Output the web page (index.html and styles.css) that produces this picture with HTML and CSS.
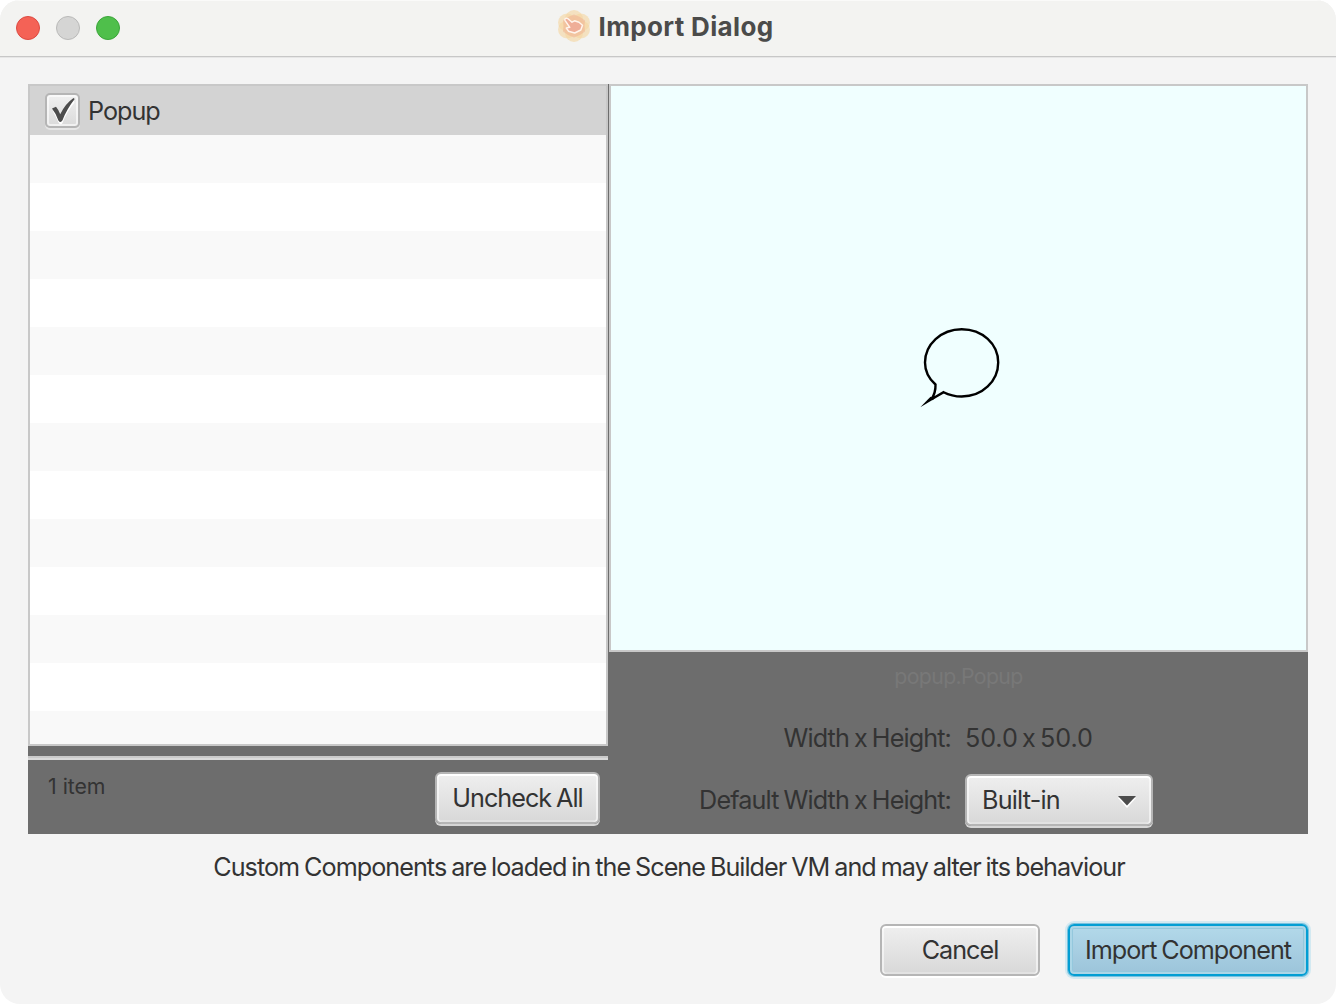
FILE: index.html
```html
<!DOCTYPE html>
<html lang="en">
<head>
<meta charset="utf-8">
<title>Import Dialog</title>
<link rel="stylesheet" href="styles.css">
</head>
<body>
<div class="window">
  <header class="titlebar">
    <div class="lights">
      <span class="light close"></span><span class="light minimize"></span><span class="light zoom"></span>
    </div>
    <div class="title">
      <svg class="app-icon" width="34" height="34" viewBox="0 0 34 34">
        <g fill="#f5d5a0" fill-opacity=".6">
          <circle cx="17" cy="10" r="9"/><circle cx="24" cy="13.500" r="9"/><circle cx="24" cy="20.500" r="9"/>
          <circle cx="17" cy="24" r="9"/><circle cx="10" cy="20.500" r="9"/><circle cx="10" cy="13.500" r="9"/>
        </g>
        <path d="M17 5.500L23 8L28 11.500L27.500 17L28 22.500L23 26L17 28.500L11 26L6 22.500L6.500 17L6 11.500L11 8Z" fill="#f0b696" fill-opacity=".6"/>
        <path d="M8 11.300C7.200 9.600 9.500 8.500 11 9.700L15 13.200L17.500 11.800L22 13.200L25.500 16.200L23.800 21L17.700 24L11.500 22.200L9.300 19L12.800 18.300Z" fill="#efae98" stroke="#fff4ec" stroke-width="1.500" stroke-linejoin="round"/>
      </svg>
      <h1 class="title-text">Import Dialog</h1>
    </div>
  </header>
  <main class="content">
    <section class="split">
      <div class="left">
        <div class="list">
          <div class="cell selected">
            <span class="checkbox">
              <svg width="24" height="28" viewBox="0 0 24 28"><path d="M2 14.500L5.200 12.800Q7.500 15 9.300 19Q13.500 10 22.600 3.500L23.500 5.500Q15.500 15 11.500 26Q10 28.500 7.800 26Q4.500 19 2 14.500z" fill="#fff"/><path d="M1 11.600L5 9.800Q7.600 12.800 9.200 17.300Q14 7 22.500 1L23.700 2Q15.800 12 11.500 23.300Q9.500 26.500 7.400 23.400Q4.500 16 1 11.600z" fill="#4c4c4c"/></svg>
            </span>
            <span class="popup-label">Popup</span>
          </div>
          <div class="cell"></div><div class="cell"></div><div class="cell"></div><div class="cell"></div>
          <div class="cell"></div><div class="cell"></div><div class="cell"></div><div class="cell"></div>
          <div class="cell"></div><div class="cell"></div><div class="cell"></div><div class="cell"></div>
          <div class="cell"></div>
        </div>
        <div class="separator"></div>
        <div class="list-footer">
          <span class="count">1 item</span>
          <button class="button uncheck"><span>Uncheck All</span></button>
        </div>
      </div>
      <div class="right">
        <div class="preview">
          <svg class="bubble" width="84" height="84" viewBox="0 0 84 84">
            <path d="M18.500 60.500C11 54 8 46.500 8 38.500C8 20.500 24 5.200 44.700 5.200S81.200 20 81.200 38.500S65.500 72.500 44.700 72.500C37.500 72.500 32 71 26.600 68.200L14.500 75.200Q18.800 68.500 18.500 60.500Z" fill="none" stroke="#000" stroke-width="2.400"/>
            <path d="M3.300 83.200L13.500 72.800L17.500 74.800Z" fill="#000"/>
          </svg>
        </div>
        <div class="class-name"><span>popup.Popup</span></div>
        <div class="size-row">
          <span class="label"><span class="size-label">Width x Height:</span></span>
          <span class="size-value">50.0 x 50.0</span>
        </div>
        <div class="default-row">
          <span class="label"><span class="default-label">Default Width x Height:</span></span>
          <button class="button select"><span>Built-in</span>
            <svg width="18" height="12" viewBox="0 0 18 12"><path d="M0 2H18L9 12Z" fill="#fff"/><path d="M0 0H18L9 9.500Z" fill="#4c4c4c"/></svg>
          </button>
        </div>
      </div>
    </section>
    <p class="notice"><span>Custom Components are loaded in the Scene Builder VM and may alter its behaviour</span></p>
    <footer class="actions">
      <button class="button cancel"><span>Cancel</span></button>
      <button class="button import"><span>Import Component</span></button>
    </footer>
  </main>
</div>
</body>
</html>
```
FILE: styles.css
```css
* { box-sizing: border-box; }
body {
  margin: 0;
  background: #fff;
  color: #333;
  font: 25.2px/32px Inter, "Liberation Sans", sans-serif;
  font-weight: 370;
  letter-spacing: -1px;
  word-spacing: -1.2px;
  white-space: nowrap;
}
.window {
  display: flex;
  flex-direction: column;
  width: 1336px;
  height: 1004px;
  border-radius: 20px;
  background: #f4f4f4;
  overflow: hidden;
}
.titlebar {
  display: grid;
  grid-template-columns: 1fr auto 1fr;
  height: 58px;
  padding: 0 16px;
  background: #f3f3f1;
  border-bottom: 1px solid #e6e6e6;
  box-shadow: inset 0 -1px #c7c7c7, inset 0 1px #fafaf9;
}
.lights { display: flex; gap: 16px; padding-top: 16px; }
.light { width: 24px; height: 24px; border: 1px solid; border-radius: 50%; }
.close { background: #f46256; border-color: #dc4a42; }
.minimize { background: #d5d5d4; border-color: #b9b9b8; }
.zoom { background: #4fbf4b; border-color: #3ba53a; }
.title { display: flex; gap: 7px; padding: 9px 5px 0 0; }
.title-text { margin: 2px 0 0; font-size: 26px; line-height: 32px; font-weight: 700; letter-spacing: .35px; word-spacing: 0; color: #4b4b4a; }
.content { flex: 1; padding: 26px 28px 28px; }
.split { display: flex; gap: 1px; height: 750px; background: #6d6d6d; }
.left { display: flex; flex-direction: column; width: 580px; }
.list {
  display: flex;
  flex-direction: column;
  height: 662px;
  border: 2px solid #c8c8c8;
  background: #fff;
  overflow: hidden;
}
.cell { flex: none; height: 48px; background: #fff; }
.cell:nth-child(even) { background: #f9f9f9; }
.cell.selected { display: flex; align-items: flex-start; height: 49px; padding: 7px 0 0 15px; background: #d3d3d3; }
.checkbox {
  display: flex;
  align-items: center;
  justify-content: center;
  width: 35px;
  height: 35px;
  border: 2px solid #b5b5b5;
  border-radius: 5px;
  background: linear-gradient(#f0f0f0, #dadada);
  box-shadow: inset 0 0 0 2px rgba(255,255,255,.6), 0 2px #e6e6e6;
}
.popup-label { margin: 2px 0 0 8px; }
.separator { height: 4px; margin-top: 10px; border-top: 2px solid #cacaca; background: #dadada; }
.list-footer { display: flex; justify-content: space-between; padding: 12px 8px 0 20px; }
.count { margin-top: -2px; font-size: 21.3px; letter-spacing: -.1px; word-spacing: .3px; }
.button {
  display: flex;
  align-items: center;
  justify-content: center;
  height: 52px;
  padding: 0;
  border: 2px solid #b5b5b5;
  border-radius: 6px;
  background: linear-gradient(#efefef, #d8d8d8);
  box-shadow: inset 0 2px #fff, inset 2px 0 rgba(255,255,255,.55), inset -2px 0 rgba(255,255,255,.55), inset 0 -2px #e2e2e2, 0 2px #d6d6d6;
  color: #333;
  font: inherit;
  letter-spacing: inherit;
  word-spacing: inherit;
}
.uncheck { width: 165px; }
.right { flex: 1; display: flex; flex-direction: column; }
.preview { display: flex; height: 568px; padding: 238px 0 0 306px; border: 2px solid #c8c8c8; background: #f0ffff; }
.class-name { height: 48px; padding-top: 8px; text-align: center; font-size: 21.3px; letter-spacing: -.65px; color: #787878; }
.size-row { display: flex; gap: 14px; height: 62px; padding-top: 22px; }
.size-value { letter-spacing: -.1px; word-spacing: -2.6px; }
.label { width: 342px; text-align: right; letter-spacing: -.88px; }
.default-row { display: flex; gap: 14px; padding-top: 12px; }
.default-row .label { padding-top: 10px; }
.select { width: 188px; justify-content: space-between; padding: 2px 15px 0; }
.select span { margin-top: -2px; letter-spacing: -.8px; }
.select svg { margin-top: 1px; }
.notice { margin: 17px 0 0; padding-left: 2px; text-align: center; letter-spacing: -.97px; }
.actions { display: flex; justify-content: flex-end; gap: 28px; padding-top: 41px; }
.cancel { width: 160px; }
.actions .cancel { box-shadow: inset 0 2px #fff, inset 2px 0 rgba(255,255,255,.55), inset -2px 0 rgba(255,255,255,.55), inset 0 -2px #e2e2e2, 0 2px #fff; }
.import {
  width: 240px;
  border-color: #039ed3;
  background: linear-gradient(#b3d9ea, #9cc4da);
  box-shadow: inset 0 0 0 2px #acd6e7, inset 0 0 0 3px #94c8dd, 0 0 0 1px #78c2df, 0 0 0 3px #d3e9f1;
}
```
